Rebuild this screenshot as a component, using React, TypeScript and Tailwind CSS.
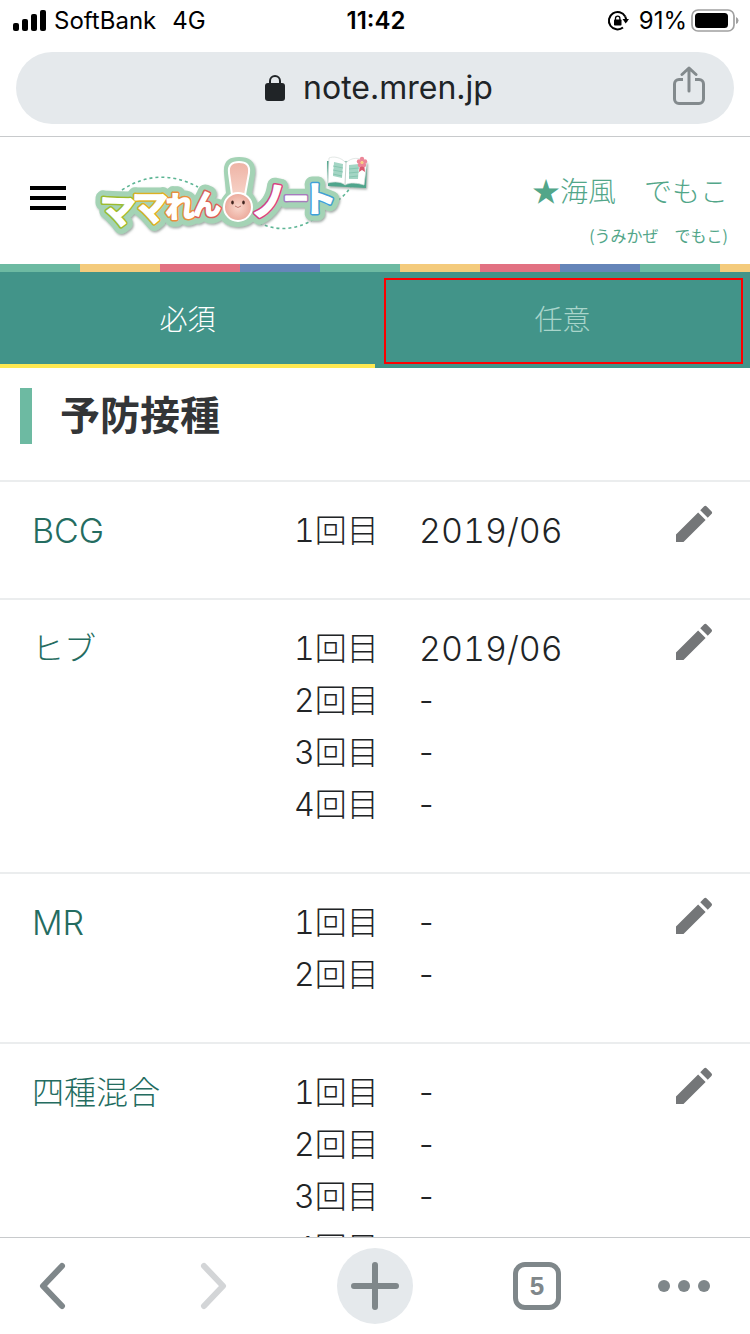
import { MdEdit } from "react-icons/md";

const tabs = [
  { label: "必須", active: true },
  { label: "任意", active: false },
];

const vaccines = [
  { name: "BCG", latin: true, doses: ["2019/06"] },
  { name: "ヒブ", latin: false, doses: ["2019/06", "-", "-", "-"] },
  { name: "MR", latin: true, doses: ["-", "-"] },
  { name: "四種混合", latin: false, doses: ["-", "-", "-", "-"] },
];

// Each letter of the logo sits at its own angle with its own outline colour
const logoLetters = [
  { char: "マ", x: 23, y: 74, size: 36, rotate: 2, color: "#9cbb2c" },
  { char: "マ", x: 56, y: 71, size: 36, rotate: 0, color: "#dcb022" },
  { char: "れ", x: 86, y: 68, size: 29, rotate: 0, color: "#ea8f3c" },
  { char: "ん", x: 113, y: 65, size: 28, rotate: 0, color: "#dd5f58" },
  { char: "ノ", x: 176, y: 65, size: 38, rotate: -4, color: "#d94080" },
  { char: "ー", x: 202, y: 58, size: 25, rotate: 0, color: "#a67bbd" },
  { char: "ト", x: 225, y: 62, size: 35, rotate: 0, color: "#3fa0d8" },
];

function LogoText({ outlined }: { outlined?: boolean }) {
  return (
    <>
      {logoLetters.map((l, i) => (
        <text key={i} x={l.x} y={l.y} fontSize={l.size} textAnchor="middle" stroke={outlined ? l.color : undefined} transform={`rotate(${l.rotate} ${l.x} ${l.y})`}>
          {l.char}
        </text>
      ))}
    </>
  );
}

function Logo() {
  return (
    <svg width="280" height="92" viewBox="0 0 280 92" role="img" aria-label="ママれんノート">
      <defs>
        <filter id="shade" x="-10%" y="-10%" width="120%" height="130%">
          <feDropShadow dx="1" dy="1.5" stdDeviation="0.8" floodColor="#5f6f68" floodOpacity="0.6" />
        </filter>
        <radialGradient id="face">
          <stop offset="0" stopColor="#f9d8cd" />
          <stop offset="1" stopColor="#eba99b" />
        </radialGradient>
        <linearGradient id="ear" x1="0" y1="0" x2="0" y2="1">
          <stop offset="0" stopColor="#eeb3a5" />
          <stop offset="1" stopColor="#f7d2c7" />
        </linearGradient>
      </defs>
      <g fill="none" stroke="#5cb594" strokeWidth="1.6" strokeDasharray="3 3">
        <path d="M28 40 Q64 16 104 37" />
        <path d="M160 70 Q190 88 222 68" />
        <path d="M244 50 Q252 45 257 36" />
      </g>
      <g strokeLinejoin="round" strokeLinecap="round" fontFamily="'Noto Sans CJK JP', sans-serif" fontWeight="700">
        {/* mint backing */}
        <g filter="url(#shade)" fill="#a4d3b5">
          <g stroke="#a4d3b5" strokeWidth="15">
            <LogoText />
          </g>
          <path d="M130 23 C129 11 135 7 145 7 C156 7 162 12 161 23 L158 43 C172 60 162 77 144 77 C125 77 117 60 132 43 Z" />
        </g>
        <g fill="none" strokeWidth="4.5">
          <LogoText outlined />
        </g>
        <g fill="#fff" stroke="#fff" strokeWidth="1.5">
          <LogoText />
        </g>
      </g>
      {/* bunny */}
      <g stroke="#fff" strokeWidth="2">
        <path d="M135 23 C134 15 138 12 145 12 C152 12 156 15 155 23 L151 45 H138 Z" fill="url(#ear)" />
        <circle cx="144" cy="57" r="14" fill="url(#face)" />
      </g>
      <ellipse cx="138.500" cy="52.500" rx="1.300" ry="2" fill="#40241f" />
      <ellipse cx="149.500" cy="52.500" rx="1.300" ry="2" fill="#40241f" />
      <path d="M141 56 Q144 59 147 56" fill="none" stroke="#b0605a" strokeWidth="0.8" />
      {/* notebook */}
      <path d="M233 11 L234 36 L272 38 L273 12 Z" fill="#4fa58c" filter="url(#shade)" />
      <path d="M252 13 C247 7 239 6 235 8 L234 33 C241 31 248 32 251 35 C256 32 264 33 270 35 L273 12 C266 7 257 7 252 13 Z" fill="#fff" stroke="#d5ddda" strokeWidth="0.7" />
      <path d="M252 13 L251 35" stroke="#c6d2cd" strokeWidth="1" />
      <path d="M240 12 L249 14 L248 28 L239 26 Z M255 15 L265 14 L264 29 L255 29 Z" fill="#a3d5c4" />
      <path d="M239 16 L249 18 M239 20 L249 22 M239 24 L248 26 M255 19 L265 18 M255 23 L265 22 M255 27 L264 26" stroke="#7fc2ab" strokeWidth="0.8" />
      <path d="M266 14 L265 22 L268 20 L271 22 L270 14 Z" fill="#d9566c" />
      <g fill="#ec8798">
        <circle cx="268" cy="9" r="2.200" />
        <circle cx="271" cy="11.500" r="2.200" />
        <circle cx="270" cy="15" r="2.200" />
        <circle cx="266" cy="15" r="2.200" />
        <circle cx="265" cy="11.500" r="2.200" />
      </g>
      <circle cx="268" cy="12.500" r="1.600" fill="#f7cf7e" />
    </svg>
  );
}

function StatusBar() {
  return (
    <div className="grid h-10 grid-cols-[1fr_auto_1fr] items-center pt-px pr-[11px] pl-[13px] text-2xl text-black">
      <div className="flex items-center">
        <svg width="33" height="22" viewBox="0 0 33 22" className="mr-2">
          <rect x="0" y="13" width="6" height="8" rx="2" />
          <rect x="9" y="9" width="6" height="12" rx="2" />
          <rect x="18" y="4" width="6" height="17" rx="2" />
          <rect x="27" y="0" width="6" height="21" rx="2" />
        </svg>
        <span>SoftBank</span>
        <span className="ml-4">4G</span>
      </div>
      <div className="font-semibold">11:42</div>
      <div className="flex items-center justify-end">
        <svg width="22" height="22" viewBox="0 0 22 22" className="mr-2.5">
          <path d="M18.200 6.500 A8.700 8.700 0 1 0 16 17.500" fill="none" stroke="#000" strokeWidth="2" />
          <path d="M18.200 6.500 Q19.500 9 19.200 12" fill="none" stroke="#000" strokeWidth="2" />
          <path d="M15.500 9 H22 L18.700 13.500 Z" />
          <rect x="7" y="9.500" width="7.500" height="6" rx="0.800" />
          <path d="M8.500 10 V8.300 a2.200 2.200 0 0 1 4.400 0 V10" fill="none" stroke="#000" strokeWidth="1.300" />
        </svg>
        <span>91%</span>
        <svg width="48" height="24" viewBox="0 0 48 24" className="ml-1">
          <rect x="1" y="1" width="42" height="21" rx="6" fill="none" stroke="#a0a0a0" strokeWidth="1.700" />
          <rect x="4" y="4" width="33" height="15" rx="3.500" />
          <path d="M45 8 Q47.500 9 47.500 11.500 T45 15 Z" fill="#a0a0a0" />
        </svg>
      </div>
    </div>
  );
}

function AddressBar() {
  return (
    <div className="border-b border-[#c8cacc] px-4 pt-3 pb-3">
      <div className="relative flex h-[72px] items-center justify-center rounded-full bg-[#e5e9ec] text-[#202427]">
        <svg width="20" height="26" viewBox="0 0 20 26" className="mr-[18px] ml-2">
          <rect x="0" y="8" width="20" height="18" rx="3" fill="currentColor" />
          <path d="M5 9 V6 a5 5 0 0 1 10 0 V9" fill="none" stroke="currentColor" strokeWidth="2" />
        </svg>
        <span className="text-[32px] leading-[40px]">note.mren.jp</span>
        <button type="button" aria-label="共有" className="absolute top-3.5 right-7">
          <svg width="34" height="42" viewBox="0 0 34 42" fill="none" stroke="#838a8d" strokeWidth="3" strokeLinecap="round" strokeLinejoin="round">
            <path d="M11 13.500 H7 a4.500 4.500 0 0 0 -4.500 4.500 V33 a4.500 4.500 0 0 0 4.500 4.500 H27 a4.500 4.500 0 0 0 4.500 -4.500 V18 a4.500 4.500 0 0 0 -4.500 -4.500 H23" strokeLinecap="butt" />
            <path d="M17 25 V2 M10 8.500 L17 2 L24 8.500" />
          </svg>
        </button>
      </div>
    </div>
  );
}

function Toolbar() {
  return (
    <nav className="grid h-[97px] shrink-0 grid-cols-[1fr_76px_1fr] items-center border-t border-[#c8cacc] bg-white text-[#7f878a]">
      <div className="flex items-center justify-between pr-[109px] pl-[38px]">
        <button type="button" aria-label="戻る">
          <svg width="30" height="50" viewBox="0 0 30 50" fill="none" stroke="currentColor" strokeWidth="6" strokeLinecap="round" strokeLinejoin="round">
            <path d="M24 5 L5 25 L24 45" />
          </svg>
        </button>
        <button type="button" aria-label="進む" disabled className="text-[#d3d5d7]">
          <svg width="30" height="50" viewBox="0 0 30 50" fill="none" stroke="currentColor" strokeWidth="6" strokeLinecap="round" strokeLinejoin="round">
            <path d="M6 5 L25 25 L6 45" />
          </svg>
        </button>
      </div>
      <button type="button" aria-label="新しいタブ" className="flex size-[76px] items-center justify-center rounded-full bg-[#e5e9ec]">
        <svg width="48" height="48" viewBox="0 0 48 48" stroke="currentColor" strokeWidth="6" strokeLinecap="round">
          <path d="M24 3 V45 M3 24 H45" />
        </svg>
      </button>
      <div className="flex items-center justify-between pr-10 pl-[100px]">
        <button type="button" aria-label="タブ一覧" className="flex size-12 items-center justify-center rounded-xl border-[5px] border-current font-['Liberation_Sans'] text-[26px] font-bold">
          5
        </button>
        <button type="button" aria-label="メニュー" className="flex gap-2">
          <span className="size-3 rounded-full bg-current" />
          <span className="size-3 rounded-full bg-current" />
          <span className="size-3 rounded-full bg-current" />
        </button>
      </div>
    </nav>
  );
}

export default function App() {
  return (
    <div className="flex h-screen flex-col overflow-hidden bg-white font-[Inter,'Noto_Sans_CJK_JP',sans-serif]">
      <StatusBar />
      <AddressBar />

      <main className="min-h-0 flex-1 overflow-hidden">
        <header className="flex h-[127px] items-start justify-between pr-[22px] pl-[30px]">
          <div className="flex items-start">
            <button type="button" aria-label="メニューを開く" className="mt-12 flex w-9 flex-col gap-1.5 pt-px">
              <span className="h-1 bg-black" />
              <span className="h-1 bg-black" />
              <span className="h-1 bg-black" />
            </button>
            <a href="#" className="mt-[13px] ml-7">
              <Logo />
            </a>
          </div>
          <div className="pt-[33px] text-right font-['Noto_Sans_CJK_JP',sans-serif] text-[#52a689]">
            <div className="text-[28px] leading-10 font-light">★海風　でもこ</div>
            <div className="mt-[13px] text-base leading-6">(うみかぜ　でもこ)</div>
          </div>
        </header>

        <div className="h-2 bg-[repeating-linear-gradient(90deg,#6dbaa2_0_80px,#f4cb7c_80px_160px,#e27182_160px_240px,#6585b9_240px_320px)]" />

        <div role="tablist" className="grid grid-cols-2 bg-[#429489]">
          {tabs.map((tab) => (
            <button
              key={tab.label}
              type="button"
              role="tab"
              aria-selected={tab.active}
              className={`relative h-24 border-b-4 pt-1 text-[28px] font-light ${tab.active ? "border-[#fee851] text-white" : "border-transparent text-[#a9d5cb]"}`}
            >
              {tab.label}
              {!tab.active && <span className="absolute top-1.5 right-[7px] bottom-0 left-[9px] border-2 border-[#fd0000]" />}
            </button>
          ))}
        </div>

        <div className="px-5 pt-5 pb-9">
          <h1 className="border-l-[12px] border-[#6dbaa2] pl-7 text-[40px] leading-[56px] font-bold text-[#333537]">
            予防接種
          </h1>
        </div>

        <table className="w-full table-fixed text-left text-[32px] leading-[52px] font-light text-[#212426]">
          <tbody>
            {vaccines.map((vaccine) => (
              <tr key={vaccine.name} className="border-t-2 border-[#ebedee] align-top">
                <th scope="row" className={`w-[294px] pt-[23px] pb-[41px] pl-8 font-light text-[#246c60] ${vaccine.latin ? "text-[34px] leading-[52px]" : ""}`}>
                  {vaccine.name}
                </th>
                <td className="w-[125px] pt-[23px] pb-[41px] tabular-nums">
                  {vaccine.doses.map((_, i) => (
                    <div key={i}>{i + 1}回目</div>
                  ))}
                </td>
                <td className="pt-[23px] pb-[41px]">
                  {vaccine.doses.map((date, i) => (
                    <div key={i} className={date === "-" ? "" : "text-[34px] leading-[52px] tabular-nums"}>
                      {date}
                    </div>
                  ))}
                </td>
                <td className="w-20 pt-[18px]">
                  <button type="button" aria-label={`${vaccine.name}を編集`} className="block text-[#747678]">
                    <MdEdit className="size-12" />
                  </button>
                </td>
              </tr>
            ))}
          </tbody>
        </table>
      </main>

      <Toolbar />
    </div>
  );
}
